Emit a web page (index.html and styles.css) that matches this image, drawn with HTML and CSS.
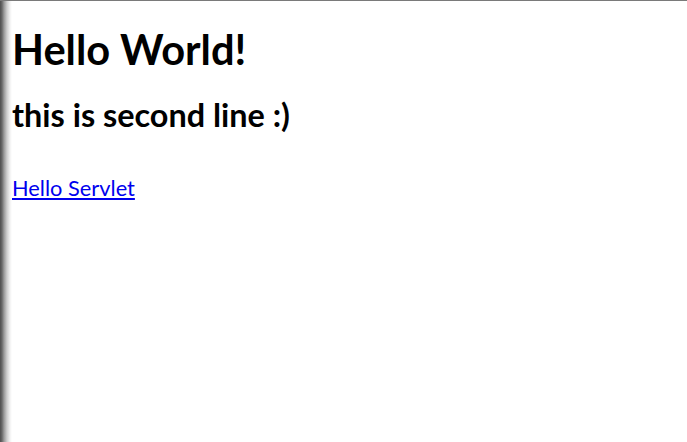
FILE: index.html
```html
<!DOCTYPE html>
<html>
<head>
<meta charset="utf-8">
<link rel="stylesheet" href="styles.css">
</head>
<body>
<div class="page">
  <h1 class="title">Hello World!</h1>
  <h2 class="subtitle">this is second line :)</h2>
  <p class="links"><a class="link" href="#">Hello Servlet</a></p>
</div>
</body>
</html>
```
FILE: styles.css
```css
html, body {
  margin: 0;
  padding: 0;
  height: 100%;
  background: #fff;
}
.page {
  box-sizing: border-box;
  height: 100%;
  border-top: 1px solid #7a7a7a;
  background: linear-gradient(to right, #4e4e4e 0px, #6a6a6a 2px, #9a9a9a 4px, #cfcfcf 7px, #f2f2f2 10px, #ffffff 12px);
  padding: 0 12px;
  font-family: Lato, "Liberation Sans", sans-serif;
  font-size: 21.8px;
  color: #000;
  overflow: hidden;
}
.title {
  font-size: 41.6px;
  font-weight: 700;
  margin: 24px 0 0;
  line-height: 48px;
}
.subtitle {
  font-size: 32.4px;
  font-weight: 700;
  margin: 24px 0 0;
  line-height: 36px;
}
.links {
  margin: 43px 0 0;
  line-height: 24px;
}
.link {
  color: #0000ee;
  text-decoration: underline;
}
```
